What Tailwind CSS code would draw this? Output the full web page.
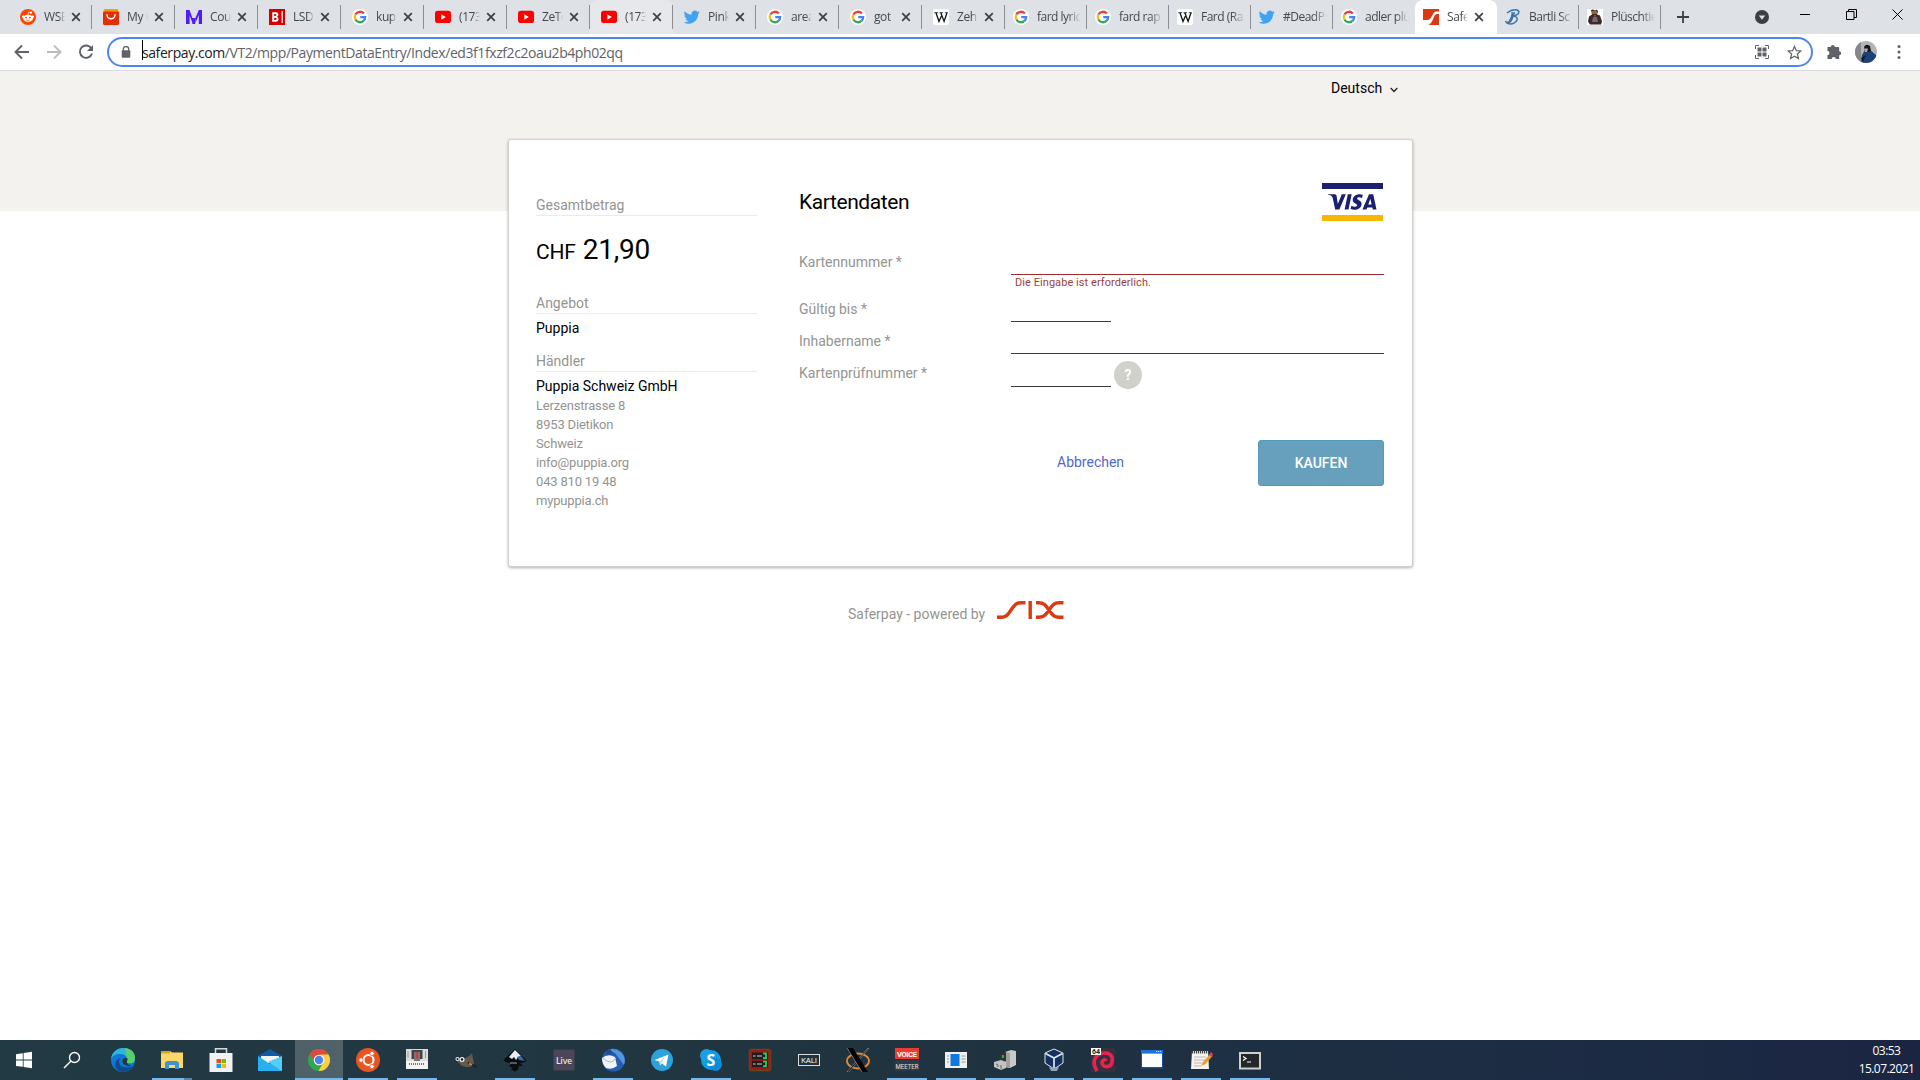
<!DOCTYPE html>
<html lang="de">
<head>
<meta charset="utf-8">
<title>Saferpay</title>
<script src="https://cdn.jsdelivr.net/npm/@tailwindcss/browser@4"></script>
</head>
<body class="w-[1920px] h-[1080px] overflow-hidden flex flex-col bg-white font-['Roboto',sans-serif]">

<svg class="hidden">
  <defs>
    <symbol id="reddit" viewBox="0 0 16 16"><circle cx="8" cy="8" r="8" fill="#ff4500"/><ellipse cx="8" cy="9.3" rx="5" ry="3.6" fill="#fff"/><circle cx="3.3" cy="7.8" r="1.3" fill="#fff"/><circle cx="12.7" cy="7.8" r="1.3" fill="#fff"/><circle cx="11" cy="3.7" r="1.1" fill="#fff"/><path d="M8 6l.6-2.8 2.2.5" stroke="#fff" stroke-width=".7" fill="none"/><circle cx="6.1" cy="8.6" r=".95" fill="#ff4500"/><circle cx="9.9" cy="8.6" r=".95" fill="#ff4500"/><path d="M6 10.9q2 1.3 4 0" stroke="#ff4500" stroke-width=".7" fill="none"/></symbol>
    <symbol id="ali" viewBox="0 0 16 16"><path d="M1.5 0h13L16 3v3H0V3z" fill="#f90"/><rect y="2.6" width="16" height="13.4" rx="1.5" fill="#e62e04"/><path d="M4 5.8a4 4 0 0 0 8 0" fill="none" stroke="#fff" stroke-width="1.5" stroke-linecap="round"/></symbol>
    <symbol id="mm" viewBox="0 0 16 16"><path d="M0 1h3.600v14H0zM12.800 1H16v14h-3.200zM3.600 1l3.100 9V15L3.600 6zM12.800 1L9 10v5l3.800-9zM6.300 9h3v6h-3z" fill="#4f1df5"/></symbol>
    <symbol id="blick" viewBox="0 0 16 16"><rect width="16" height="16" fill="#d50000"/><path d="M3.200 3.200h3.600a2.400 2.400 0 0 1 1.200 4.600 2.600 2.600 0 0 1-1 5H3.200zM5.200 5v2h1.100a1 1 0 0 0 0-2zm0 3.700V11h1.300a1.100 1.100 0 0 0 0-2.300zM12.600 2h1.200v12h-1.200z" fill="#fff" fill-rule="evenodd"/></symbol>
    <symbol id="google" viewBox="0 0 16 16"><circle cx="8" cy="8" r="8" fill="#fff"/><g fill="none" stroke-width="2.3"><path d="M11.900 4.500A5.200 5.200 0 0 0 3.400 5.600" stroke="#ea4335"/><path d="M3.400 5.600a5.200 5.200 0 0 0 0 4.800" stroke="#fbbc05"/><path d="M3.400 10.400a5.200 5.200 0 0 0 8.100 1.500" stroke="#34a853"/><path d="M11.500 11.900A5.200 5.200 0 0 0 13.200 8.100H8.200" stroke="#4285f4"/></g></symbol>
    <symbol id="yt" viewBox="0 0 16 16"><rect y="1.800" width="16" height="12.200" rx="2.800" fill="#f00"/><path d="M6.300 5.300L10.800 8l-4.500 2.700z" fill="#fff"/></symbol>
    <symbol id="tw" viewBox="0 0 24 24"><path fill="#40a2f2" d="M23.600 4.900a9.600 9.600 0 0 1-2.800.8 4.900 4.900 0 0 0 2.100-2.700 9.900 9.900 0 0 1-3.100 1.200 4.900 4.900 0 0 0-8.400 4.500A14 14 0 0 1 1.300 3.500a4.900 4.900 0 0 0 1.500 6.600 4.900 4.900 0 0 1-2.200-.6c0 2.300 1.600 4.400 3.900 4.900a5 5 0 0 1-2.200.1 4.900 4.900 0 0 0 4.600 3.400A9.900 9.900 0 0 1-.4 19.900 14 14 0 0 0 7.200 22c9.100 0 14.300-7.700 14-14.600a10 10 0 0 0 2.400-2.500z"/></symbol>
    <symbol id="wiki" viewBox="0 0 16 16"><rect width="16" height="16" rx="2" fill="#fff"/><path d="M1.200 3.700h4M6.500 3.700h3.600M11.800 3.700h3" stroke="#111" stroke-width=".8"/><path d="M3 3.800l3 8.600 2.300-5.200M7.800 3.800l3.300 8.600L14 3.800" fill="none" stroke="#111" stroke-width="1.300"/></symbol>
    <symbol id="six" viewBox="0 0 16 16"><path d="M0 0h16v2.500h-2.500C9 2.500 9.500 11 4 11H0zM16 5v11H5c5.500-1 5-11 9-11z" fill="#dc3912"/></symbol>
    <symbol id="bartli" viewBox="0 0 16 16"><path d="M2 4q5-4 10-3 3 1 1 4-2 2-6 2 6 0 5 4-2 4-7 4-3 0-4-2 4 2 6-3L9.500 3M4 13q4-6 3-10" fill="none" stroke="#3a73a8" stroke-width="1.500"/></symbol>
    <symbol id="bear" viewBox="0 0 16 16"><rect width="16" height="16" fill="#fff"/><path d="M4 1l2-.5 2 1 2-1 1 2-1 3 3 1 2 6-1 3H3l-2-3 1-5 3-2z" fill="#3c2a26"/><path d="M5 2h5v3H5z" fill="#a4622a"/><path d="M6 8h4l1 5H5z" fill="#666b86"/><path d="M7 6l2 0-1 4z" fill="#c33"/></symbol>
    <symbol id="x" viewBox="0 0 10 10"><path d="M1.200 1.200l7.600 7.600M8.800 1.200L1.200 8.800" stroke="#3c4043" stroke-width="1.700"/></symbol>
  </defs>
</svg>

<!-- Tab strip -->
<header class="h-[34px] shrink-0 bg-[#dee1e6] flex items-stretch pl-[9px]">
  <div id="tabs" class="flex"></div>
  <div class="w-[43px] flex items-center justify-center"><svg class="w-3 h-3" viewBox="0 0 12 12"><path d="M6 0v12M0 6h12" stroke="#3c4043" stroke-width="1.800"/></svg></div>
  <div class="ml-auto flex items-center">
    <svg class="w-[14px] h-[14px] mr-[31px]" viewBox="0 0 14 14"><circle cx="7" cy="7" r="7" fill="#3c4043"/><path d="M3.800 5.400h6.400L7 9.800z" fill="#dee1e6"/></svg>
    <svg class="w-[10px] h-[10px] mr-[36px]" viewBox="0 0 10 10"><path d="M0 2.500h10" stroke="#000"/></svg>
    <svg class="w-[11px] h-[11px] mr-[35px] mb-[5px]" viewBox="0 0 11 11"><path d="M.5 2.500h7.500v8H.5zM2.500 2.500v-2h8v8H8" stroke="#000" fill="none"/></svg>
    <svg class="w-[11px] h-[11px] mr-[17px] mb-[5px]" viewBox="0 0 11 11"><path d="M.5.5l10 10M10.500.5l-10 10" stroke="#000"/></svg>
  </div>
</header>

<!-- Toolbar -->
<div class="h-9 shrink-0 bg-white flex items-center">
  <svg class="w-4 h-4 ml-[14px]" viewBox="0 0 16 16"><path d="M15 8H2M8 1.500L1.500 8 8 14.500" fill="none" stroke="#5f6368" stroke-width="1.900"/></svg>
  <svg class="w-4 h-4 ml-4" viewBox="0 0 16 16"><path d="M1 8h13M8 1.500L14.500 8 8 14.500" fill="none" stroke="#babcbe" stroke-width="1.900"/></svg>
  <svg class="w-4 h-4 ml-4" viewBox="0 0 16 16"><path d="M13.300 4.300A6.200 6.200 0 1 0 14 9.500" fill="none" stroke="#5f6368" stroke-width="1.900"/><path d="M15 1v6H9z" fill="#5f6368"/></svg>
  <div class="ml-[13px] w-[1706px] h-[30px] rounded-full border-2 border-[#4f86ee] flex items-center">
    <svg class="w-[10px] h-3 ml-3" viewBox="0 0 10 12"><path d="M2.300 5V3.200a2.700 2.700 0 0 1 5.400 0V5" fill="none" stroke="#5f6368" stroke-width="1.300"/><rect x=".7" y="4.200" width="8.600" height="7.500" rx="1" fill="#5f6368"/></svg>
    <div class="ml-[11px] h-5 w-px bg-black -mt-1"></div>
    <div class="-ml-px font-['Open_Sans',sans-serif] text-[14px] leading-5 tracking-[-0.42px] whitespace-nowrap text-[#5f6368] pt-px"><span class="text-[#202124]">saferpay.com</span>/VT2/mpp/PaymentDataEntry/Index/ed3f1fxzf2c2oau2b4ph02qq</div>
    <svg class="w-[14px] h-[14px] ml-auto mr-[18px]" viewBox="0 0 14 14"><path d="M.5 4V.5H4M10 .5h3.500V4M13.500 10v3.500H10M4 13.500H.5V10" stroke="#5f6368" fill="none"/><path d="M2.500 2.500h4v4h-4zM7.500 2.500h4v4h-4zM2.500 7.500h4v4h-4zM7.500 7.500h4v4h-4z" fill="#5f6368"/></svg>
    <svg class="w-[15px] h-[15px] mr-[9px]" viewBox="0 0 16 16"><path d="M8 1.500l2 4.500 4.800.4-3.700 3.200 1.100 4.800L8 11.900l-4.200 2.500 1.100-4.800L1.200 6.400 6 6z" fill="none" stroke="#5f6368" stroke-width="1.300"/></svg>
  </div>
  <svg class="w-4 h-4 ml-[13px]" viewBox="0 0 16 16"><path d="M4.800 3a2 2 0 0 1 4 0h3.400q1 0 1 1v3.200a2 2 0 0 1 0 4V15H9.700a2 2 0 0 0-4 0H1.500v-4a2 2 0 0 0 0-4V3z" fill="#5f6368"/></svg>
  <svg class="w-[22px] h-[22px] ml-[13px]" viewBox="0 0 22 22"><defs><clipPath id="av"><circle cx="11" cy="11" r="11"/></clipPath></defs><g clip-path="url(#av)"><rect width="22" height="22" fill="#b3b4b6"/><path d="M0 0h6v22H0z" fill="#85878a"/><path d="M10 9h5l6 5v8H6l1-8z" fill="#1b4377"/><path d="M9 6q2-4 6-1l1 5-3 1-3-1z" fill="#15161d"/><path d="M9.500 7.500h3.500l-1 3.500h-2z" fill="#c7a596"/><path d="M6 17l5-3-3 7z" fill="#101c33"/></g></svg>
  <svg class="w-1 h-4 ml-[20px]" viewBox="0 0 4 16"><g fill="#5f6368"><circle cx="2" cy="2.600" r="1.500"/><circle cx="2" cy="8" r="1.500"/><circle cx="2" cy="13.400" r="1.500"/></g></svg>
</div>

<!-- Page -->
<main class="grow border-t border-[#d9dbdd] bg-[linear-gradient(#f3f2ee_140px,#fff_140px)] text-black">
  <div class="h-[68px] pl-[1331px] pt-[7px] flex items-start text-[14px] leading-5">Deutsch<svg class="w-2 h-[6px] ml-2 mt-[9px]" viewBox="0 0 8 6"><path d="M.7 1L4 4.500 7.300 1" fill="none" stroke="#222" stroke-width="1.300"/></svg></div>

  <section class="ml-[508px] w-[905px] h-[428px] bg-white border border-[#d1d1cc] rounded-[3px] shadow-[0_1px_3px_rgba(0,0,0,0.3)] flex">
    <aside class="ml-[27px] w-[221px] pt-[55px] text-[14px] leading-5">
      <h2 class="border-b border-[#ebebeb] text-[#949490]">Gesamtbetrag</h2>
      <p class="mt-[16px] h-[35px] text-[28px] leading-9 flex items-baseline gap-[7px] tracking-[-0.2px]"><span class="text-[21px]">CHF</span>21,90</p>
      <h2 class="mt-[26px] border-b border-[#ebebeb] text-[#949490]">Angebot</h2>
      <p class="mt-1">Puppia</p>
      <h2 class="mt-[13px] border-b border-[#ebebeb] text-[#949490]">Händler</h2>
      <p class="mt-1">Puppia Schweiz GmbH</p>
      <address class="not-italic text-[13px] leading-[19px] tracking-[-0.18px] text-[#949490]">Lerzenstrasse 8<br>8953 Dietikon<br>Schweiz<br>info@puppia.org<br>043 810 19 48<br>mypuppia.ch</address>
    </aside>

    <form class="ml-[42px] w-[585px] pt-[43px] text-[14px] leading-5 text-[#949490]">
      <div class="h-[69px] flex justify-between">
        <h1 class="text-[21px] leading-[30px] tracking-[-0.42px] text-black mt-1">Kartendaten</h1>
        <svg class="w-[61px] h-[38px] mr-px" viewBox="0 0 61 38"><path d="M0 0h61v6H0z" fill="#1a1f71"/><path d="M0 32h61v6H0z" fill="#f7b600"/><g fill="#1a1f71"><path d="M6 11.300h6.600c1.400 0 1.800.8 2 1.800l1.200 8 4-9.800h4L17.400 26.600h-4.200L10.700 15C10.200 12.600 8 12 6 11.700z"/><path d="M25.800 11.300h3.900l-3.200 15.300h-3.900z"/><path d="M40.800 11.800l-.7 3.200c-2.500-1.100-5-.8-5 .5 0 1.600 4.500 1.700 4.500 5.300 0 5.800-7 7-11 5.300l.7-3.400c2.600 1.400 5.900 1.300 5.900-.4 0-1.500-4.500-1.800-4.500-5.200 0-5.100 6-7.100 10.100-5.300z"/><path d="M47 11.300h4.200l3.300 15.300h-3.700l-.4-2.200h-5l-1 2.200h-4l6-13.900c.3-.9.700-1.400.6-1.400zm1.300 4.400l-2 5.700h3.300z" fill-rule="evenodd"/></g></svg>
      </div>
      <div class="h-[47px] flex"><label class="w-[212px]">Kartennummer *</label><div class="w-[373px]"><div class="h-[23px] border-b border-[#a02c2c]"></div><p class="pl-1 text-[11px] leading-[14px] tracking-[0.06px] text-[#a03f3f] mt-px">Die Eingabe ist erforderlich.</p></div></div>
      <div class="h-8 flex"><label class="w-[212px]">Gültig bis *</label><div class="w-[100px] h-[23px] border-b border-[#3c3c3c]"></div></div>
      <div class="h-8 flex"><label class="w-[212px]">Inhabername *</label><div class="w-[373px] h-[23px] border-b border-[#3c3c3c]"></div></div>
      <div class="h-[77px] flex"><label class="w-[212px]">Kartenprüfnummer *</label><div class="w-[100px] h-6 border-b border-[#3c3c3c]"></div><span class="ml-[3px] -mt-[2px] w-7 h-7 rounded-full bg-[#d1d1cc] text-white font-bold flex items-center justify-center">?</span></div>
      <div class="flex justify-between items-start pl-[258px]">
        <a class="text-[#5068d0] mt-3">Abbrechen</a>
        <button type="button" class="w-[126px] h-[46px] pb-px rounded-[3px] border border-[#5599ba] bg-[#66a0bd] text-white font-medium text-[14px]">KAUFEN</button>
      </div>
    </form>
  </section>

  <footer class="ml-[848px] mt-[34px] flex items-start">
    <p class="text-[14px] leading-5 mt-[3px] text-[#949490] w-[149px]">Saferpay - powered by</p>
    <svg class="w-[67px] h-[18px]" viewBox="0 0 67 18"><g fill="none" stroke="#dc3912" stroke-width="3.400"><path d="M0 16.300h4c5 0 6.500-2 10-7.300s5.500-7.300 10-7.300h4.500M33.200 0v18M39 1.700h2.500c5 0 7 2 10.500 7.300s5.500 7.300 10 7.300h4.500M39 16.300h2.500c5 0 7-2 10.500-7.300s5.500-7.300 10-7.300h4.500"/></g></svg>
  </footer>
</main>

<!-- Taskbar -->
<nav class="h-10 shrink-0 bg-[linear-gradient(90deg,#223a44_0%,#20353f_40%,#1e3042_62%,#1c2b44_85%,#1b2542_100%)] flex">
  <div id="dock" class="flex"></div>
  <div class="ml-auto w-[67px] pt-[2px] text-center text-white font-['Open_Sans',sans-serif] text-[12px] leading-[18px] tracking-[-0.55px]">03:53<br>15.07.2021</div>
</nav>

<script>
// [icon, title, has close button, width, state]
const tabs = [
  ['reddit','WSB',1,'a'],['ali','My O',1,'a'],['mm','Cou',1,'a'],['blick','LSD',1,'a'],['google','kupf',1,'a'],
  ['yt','(173',1,'a'],['yt','ZeTo',1,'a'],['yt','(173',1,'a','light'],['tw','Pink',1,'a'],['google','area',1,'a'],
  ['google','got',1,'a'],['wiki','Zeh',1,'a'],['google','fard lyric',0,'b'],['google','fard rap',0,'b'],['wiki','Fard (Ra',0,'b'],
  ['tw','#DeadP',0,'b'],['google','adler plü',0,'b','before'],['six','Safe',1,'b','active'],['bartli','Bartli Sc',0,'b'],['bear','Plüschtie',0,'b']
];
document.getElementById('tabs').innerHTML = tabs.map(([icon, title, close, size, state]) => {
  const width = size === 'a' ? 'w-[83px]' : 'w-[82px]';
  const back = state === 'active' ? 'bg-white rounded-t-lg' : state === 'light' ? 'bg-[#e6e8ec] rounded-t-lg' : '';
  const line = state === 'active' || state === 'before' ? '' : 'border-r border-[#8b8e94]';
  const pad = size === 'a' ? 'pl-[11px]' : 'pl-[8px]';
  const text = close ? 'w-[21px] tracking-[-0.4px]' : 'w-[44px] tracking-[-0.5px]';
  return `<div class="${width} ${back} flex items-center"><div class="w-full h-6 flex items-center ${pad} ${line}">
    <svg class="w-4 h-4 shrink-0"><use href="#${icon}"/></svg>
    <span class="ml-2 ${text} shrink-0 overflow-hidden whitespace-nowrap font-['Open_Sans',sans-serif] text-[12px] leading-5 text-[#45494d] mask-r-from-70%">${title}</span>
    ${close ? '<svg class="ml-[6px] w-[10px] h-[10px] shrink-0"><use href="#x"/></svg>' : ''}
  </div></div>`;
}).join('');

// [drawing on a 24-unit grid, running indicator]
const dock = [
  ['<path d="M4 6.200l6.800-1v6.400H4zM11.600 5l8.400-1.200v7.800h-8.400zM4 12.400h6.800v6.400L4 17.900zM11.600 12.400H20v7.800l-8.400-1.200z" fill="#fff"/>'],
  ['<circle cx="14.500" cy="9.500" r="5" fill="none" stroke="#fff" stroke-width="1.400"/><path d="M11 13l-7 7" stroke="#fff" stroke-width="1.400"/>'],
  ['<circle cx="12" cy="12" r="12" fill="#0f78d4"/><path d="M0 11C1 4 6 0 12 0c8 0 12 5 12 10s-4 6-7 5c-3 0-1-2-1-4 0-3-3-5-7-5S1 8 0 11z" fill="#2fb5dc"/><path d="M14 0c7 1 10 5 10 10s-4 6-7 5c-3 0-1-2-1-4z" fill="#56d06c"/><path d="M8 13c0 6 6 8 14 5-4 7-13 8-17 2-2-4 0-9 4-10z" fill="#114a8b"/><path d="M11.500 12c-1 5 5 7 11 5.500-5 1-8-3-6-5.500 1-3-4-3-5 0z" fill="#213842"/>'],
  ['<path d="M1 3h9l2 1.500h11V20H1z" fill="#ffd768"/><path d="M1 3h9v2.500H1z" fill="#dca21e"/><path d="M5 21v-5q0-3 3-3h8q3 0 3 3v5h-4v-4H9v4z" fill="#3d93d4"/>','split'],
  ['<path d="M6.500 6V.8h11V6" fill="none" stroke="#d9dadb" stroke-width="1.500"/><path d="M.5 5h23v19H.5z" fill="#f1f1f2"/><path d="M7.500 11H12v4H7.500z" fill="#e8491d"/><path d="M12.600 11H17v4h-4.400z" fill="#7fba00"/><path d="M7.500 15.700H12V20H7.500z" fill="#00a4ef"/><path d="M12.600 15.700H17V20h-4.400z" fill="#ffb900"/>'],
  ['<path d="M0 8l12-7 12 7v15H0z" fill="#0f5ba8"/><path d="M3 8h18v7H3z" fill="#f2f4f6"/><path d="M0 8l12 8 12-8v15H0z" fill="#29b0ee"/><path d="M24 8v15L10 14z" fill="#54cdf8"/>'],
  ['<circle cx="12" cy="12" r="11" fill="#2da94f"/><path d="M2.500 6.500A11 11 0 0 1 21.500 6.500L12 8z" fill="#e04a3c"/><path d="M2.500 6.500L8 15l4-7z" fill="#e04a3c"/><path d="M21.500 6.500A11 11 0 0 1 11.500 23L16.500 14l-3-7.500z" fill="#fdd043"/><circle cx="12" cy="12" r="5.300" fill="#fff"/><circle cx="12" cy="12" r="4.200" fill="#4a84ee"/>','full'],
  ['<circle cx="12" cy="12" r="12" fill="#e95420"/><circle cx="12.500" cy="12" r="5" fill="none" stroke="#fff" stroke-width="2.200"/><g fill="#fff" stroke="#e95420" stroke-width=".8"><circle cx="5" cy="12" r="2.200"/><circle cx="16" cy="5.500" r="2.200"/><circle cx="16" cy="18.500" r="2.200"/></g>','on'],
  ['<rect x="1" y="1" width="22" height="20" fill="#dcdcda"/><rect x="1" y="13" width="22" height="8" fill="#f3f3f1"/><rect x="6.500" y="2" width="11" height="9" fill="#444"/><path d="M9 4h6v9H9z" fill="#777"/><path d="M11 4.500h2v6h-2z" fill="#d33"/><path d="M4 16h16" stroke="#777" stroke-width="2" stroke-dasharray="1 1"/><path d="M3 3v7M20.500 3v7" stroke="#999"/>','on'],
  ['<path d="M1 11c1-2 5-1 6 0 4-1 7-1 11-6l2 11-4 3c-5 0-8 0-10-3z" fill="#625b50"/><circle cx="3.500" cy="11" r="2" fill="#eee"/><circle cx="8" cy="11.500" r="2.500" fill="#eee"/><circle cx="8" cy="11.500" r="1.200" fill="#111"/><circle cx="3.500" cy="11" r="1" fill="#111"/><path d="M14 15l9 4" stroke="#222" stroke-width="2"/><path d="M15 15.500l3 1.300" stroke="#d77b2c" stroke-width="2"/>'],
  ['<path d="M12 1l11 11q1 2-3 2.500l-3 1 3 2q-2 1-4 0l-1 4-3 2-4-2 2-2-4-1 2-3-6-2q-2-1-1-2z" fill="#0c0d10"/><path d="M12 2l6 6-3 1-2 3-2-3-2 2-3-2z" fill="#e8edf4"/><path d="M14 9l4-1 4 5-6-1z" fill="#3b6aa5"/><path d="M7 15l7 0" stroke="#9ba3ad"/>','on'],
  ['<rect x="1.500" y="1.500" width="21" height="21" fill="#4c4658"/><text x="12" y="16" text-anchor="middle" font-size="9" fill="#fff" font-family="Lato">Live</text>'],
  ['<circle cx="12.500" cy="12" r="11.500" fill="#265bb0"/><path d="M7 2a12 12 0 0 1 16 15L14 5z" fill="#5496dd"/><path d="M1 10q6-5 13-1l2 9q-5 4-11 2-4-4-4-10z" fill="#f1f3f5"/><path d="M2 10q8 8 13 0" fill="none" stroke="#aab4c0"/><path d="M4 3l5-2 3 4-6 2z" fill="#244a91"/>','on'],
  ['<circle cx="12" cy="12" r="11" fill="#2ca2dc"/><path d="M4.500 12L18.500 6.500 16 18.500l-4-3-2 2-.5-4z" fill="#fff"/><path d="M9.500 13.500l6.500-5-4.500 6-1.500 3z" fill="#b9d8e8"/>'],
  ['<circle cx="12" cy="12" r="10" fill="#0d9fe6"/><circle cx="7.500" cy="7.500" r="6.500" fill="#1a9fe2"/><circle cx="16.500" cy="16.500" r="6.500" fill="#0b8dd8"/><text x="12" y="17.500" text-anchor="middle" font-size="16" font-weight="700" fill="#fff" font-family="Open Sans">S</text>','on'],
  ['<rect x="1.500" y="1.500" width="21" height="21" rx="2" fill="#a31616" stroke="#6a431e" stroke-width="1.500"/><path d="M4 4.500h16v6.800H4zM4 12.700h16v6.300H4z" fill="#1d1d1d"/><path d="M5 8h2.500M9 8h5M5 16h2.500M9 16h5" stroke="#777" stroke-width="2"/><path d="M15 5.500h3v4.500h-3M15 13.700h3v4.500h-3" stroke="#1bd460" stroke-width="1.800" fill="none"/>'],
  ['<rect x="1.500" y="6.500" width="21" height="11" fill="none" stroke="#d9dee0"/><text x="12" y="15" text-anchor="middle" font-size="8" textLength="16" fill="#fff" font-family="Open Sans">KALI</text>'],
  ['<ellipse cx="12" cy="13" rx="11" ry="7.500" fill="none" stroke="#e88732" stroke-width="1.800"/><path d="M22 0h1L3 24H1z" fill="#050505" stroke="#bbb" stroke-width=".5"/><path d="M1 0h6l15 24h-6z" fill="#050505"/><path d="M1 0l15 24" stroke="#aaa" stroke-width=".6"/>'],
  ['<path d="M0 0h24v11H0z" fill="#ea3d2f"/><path d="M0 12h24v11H0z" fill="#2a3a47"/><text x="12" y="8.500" text-anchor="middle" font-size="7.500" textLength="20" font-weight="700" fill="#fff" font-family="Roboto">VOICE</text><text x="12" y="20.500" text-anchor="middle" font-size="7.500" textLength="23" lengthAdjust="spacingAndGlyphs" fill="#e1e4e6" font-family="Roboto">MEETER</text>','on'],
  ['<path d="M1 4h22v16H1z" fill="#f0f0f0"/><path d="M6.500 6h9v12h-9z" fill="#0d79df"/><path d="M3 8h2M3 11h2M3 14h2M17.500 8h4M17.500 11h4M17.500 14h4" stroke="#999"/>','on'],
  ['<path d="M12 4l6-2 5 1v14l-6 3-5-1z" fill="#c9c9c7"/><path d="M12 4l5 1v15l-5-1z" fill="#a0a19f"/><path d="M7 6l6-2v9l-6 1z" fill="#333"/><path d="M9 7h2v3H9z" fill="#19c22b"/><path d="M1 14l7-2 5 2v6l-5 2-7-3z" fill="#c4c4c3"/><path d="M3 16l2 1v2M8 17v4" stroke="#666" fill="none"/>','on'],
  ['<path d="M12 1l9 4v10l-9 6-9-6V5z" fill="#14325f" stroke="#dfe6ef"/><path d="M3.500 5.500L12 10l8.500-4.500M12 10v10" fill="none" stroke="#dfe6ef" stroke-width="1.700"/><path d="M7 19l5 1 5-1-2 4H9z" fill="#8fa3b9"/>','on'],
  ['<rect width="24" height="24" fill="#39303f"/><path d="M6 23C0 14 4 5 14 5c6 0 8 4 7 9-1 6-9 6-10 1 0-3 3-4 4-2" fill="none" stroke="#ed214e" stroke-width="3.600"/><path d="M0 0h10v7H0z" fill="#fff"/><text x="5" y="6" text-anchor="middle" font-size="7" font-weight="700" fill="#222" font-family="Roboto">64</text>','on'],
  ['<path d="M1 2h22v18.500H1z" fill="#1552a4"/><path d="M1 2h22v3H1z" fill="#1b73d9"/><path d="M2 5.500h20v13.500H2z" fill="#fdfdfa"/><path d="M16 3.500h5" stroke="#c8daf1" stroke-dasharray="1.200 .7"/>','on'],
  ['<path d="M3 3h16l1 18H2z" fill="#f5f3ed"/><path d="M3 4h16" stroke="#444" stroke-width="3" stroke-dasharray="1.200 .8"/><path d="M5 9h12M5 12h11M5 15h8M5 18h7" stroke="#bbb"/><path d="M12 18l2-4 7-8 2.500 2-7 8z" fill="#ef982e"/><path d="M20 7l2-3 2 2-1 3z" fill="#d44"/>','on'],
  ['<path d="M1 4h22v17.500H1z" fill="#cfcfcb"/><path d="M3 6h18v13.500H3z" fill="#232729"/><path d="M5 8.500l3 2-3 2M9 14h4" fill="none" stroke="#fff" stroke-width="1.200"/>','on']
];
document.getElementById('dock').innerHTML = dock.map(([art, run], i) => {
  const slot = run === 'full' ? 'bg-[#4f6269]' : '';
  const gap = i === 1 ? 'mr-[3px]' : i === 0 ? '' : 'mr-px';
  const bar = run === 'full' ? '<div class="w-12 h-[2px] bg-[#76b9ed]"></div>'
    : run === 'split' ? '<div class="w-10 h-[2px] flex"><div class="w-8 bg-[#76b9ed]"></div><div class="w-2 bg-[#5585ac]"></div></div>'
    : run ? '<div class="w-10 h-[2px] bg-[#76b9ed]"></div>' : '';
  return `<div class="w-12 h-10 ${gap} ${slot} flex flex-col items-center justify-between"><svg class="w-6 h-6 mt-2" viewBox="0 0 24 24">${art}</svg>${bar}</div>`;
}).join('');
</script>
</body>
</html>
